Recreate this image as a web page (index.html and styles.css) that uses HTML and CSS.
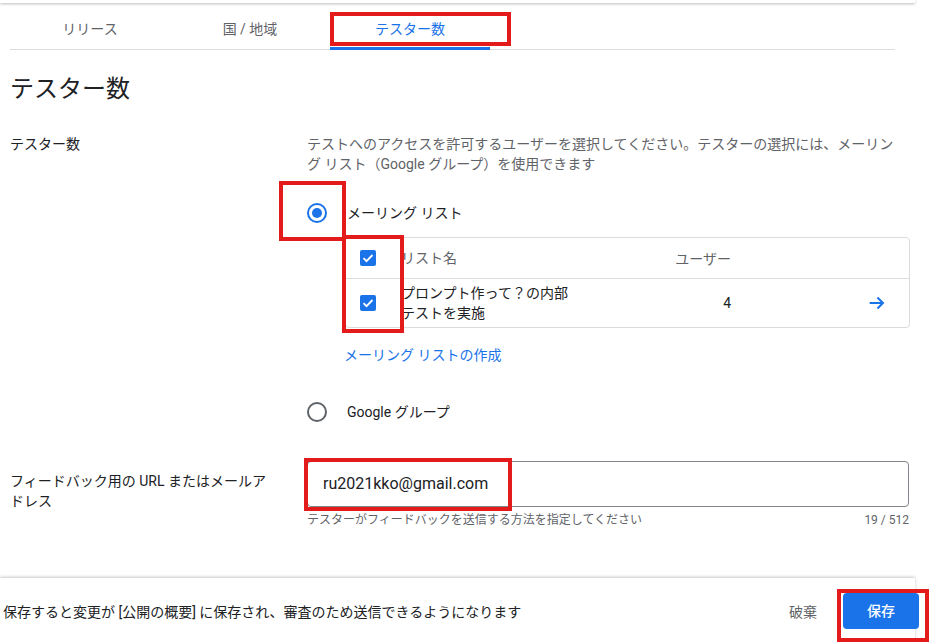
FILE: index.html
```html
<!DOCTYPE html>
<html lang="ja">
<head>
<meta charset="utf-8">
<link rel="stylesheet" href="styles.css">
</head>
<body>
<div class="topedge"></div>
<div class="page">
  <nav class="tabs">
    <div class="tab">リリース</div>
    <div class="tab">国 / 地域</div>
    <div class="tab active">テスター数</div>
  </nav>
  <h1 class="title">テスター数</h1>

  <section class="row row-testers">
    <div class="label">テスター数</div>
    <div class="content">
      <p class="desc">テストへのアクセスを許可するユーザーを選択してください。テスターの選択には、メーリング リスト（Google グループ）を使用できます</p>
      <div class="option">
        <span class="radio checked"></span>
        <span class="opt-label">メーリング リスト</span>
      </div>
      <div class="table">
        <div class="trow thead">
          <span class="cb"><svg viewBox="0 0 18 18" width="18" height="18"><rect x="1" y="1" width="16" height="16" rx="2" fill="#1a73e8"/><path d="M4.5 9.2l3 3 6-6.2" fill="none" stroke="#fff" stroke-width="1.8"/></svg></span>
          <span class="c-name">リスト名</span>
          <span class="c-users">ユーザー</span>
          <span class="c-act"></span>
        </div>
        <div class="trow tbody">
          <span class="cb"><svg viewBox="0 0 18 18" width="18" height="18"><rect x="1" y="1" width="16" height="16" rx="2" fill="#1a73e8"/><path d="M4.5 9.2l3 3 6-6.2" fill="none" stroke="#fff" stroke-width="1.8"/></svg></span>
          <span class="c-name">プロンプト作って？の内部<br>テストを実施</span>
          <span class="c-users">4</span>
          <span class="c-act"><svg viewBox="0 0 24 24" width="22" height="22"><path d="M4 12h14M12.5 6l6 6-6 6" fill="none" stroke="#1a73e8" stroke-width="2.2"/></svg></span>
        </div>
      </div>
      <a class="link">メーリング リストの作成</a>
      <div class="option option2">
        <span class="radio"></span>
        <span class="opt-label g">Google グループ</span>
      </div>
    </div>
  </section>

  <section class="row row-feedback">
    <div class="label">フィードバック用の URL またはメールアドレス</div>
    <div class="content">
      <div class="input">ru2021kko@gmail.com</div>
      <div class="helper"><span>テスターがフィードバックを送信する方法を指定してください</span><span>19 / 512</span></div>
    </div>
  </section>
</div>

<footer class="footer">
  <span class="ftext">保存すると変更が [公開の概要] に保存され、審査のため送信できるようになります</span>
  <span class="discard">破棄</span>
  <span class="save">保存</span>
</footer>

<div class="mark m1"></div>
<div class="mark m2"></div>
<div class="mark m3"></div>
<div class="mark m4"></div>
<div class="mark m5"></div>
</body>
</html>
```
FILE: styles.css
```css
* { box-sizing: border-box; }
html, body { margin: 0; padding: 0; background: #fff; }
body {
  font-family: Roboto, "Noto Sans CJK JP", sans-serif;
  color: #202124;
  font-size: 14px;
  width: 929px;
  height: 643px;
  overflow: hidden;
  position: relative;
}
.topedge {
  width: 915px;
  height: 3px;
  background: #fff;
  box-shadow: 0 1px 3px rgba(0,0,0,0.28);
}
.page { padding: 9px 0 0 0; }
.tabs {
  display: flex;
  margin-left: 10px;
  width: 885px;
  border-bottom: 1px solid #dadce0;
  height: 38px;
}
.tab {
  width: 160px;
  text-align: center;
  line-height: 34px;
  color: #5f6368;
  font-size: 14px;
}
.tab.active {
  color: #1a73e8;
  border-bottom: 3px solid #1a73e8;
  margin-bottom: -1px;
}
.title {
  margin: 23px 0 0 10px;
  font-size: 24px;
  font-weight: 400;
  line-height: 32px;
  color: #202124;
}
.row {
  display: grid;
  grid-template-columns: 297px 602px;
  padding-left: 10px;
}
.row-testers { margin-top: 29px; }
.label { line-height: 20px; color: #202124; }
.row-feedback .label { padding-right: 30px; margin-top: 10px; }
.desc {
  margin: 0;
  width: 596px;
  line-height: 20px;
  color: #5f6368;
}
.option {
  display: flex;
  align-items: center;
  height: 24px;
  margin-top: 27px;
}
.radio {
  width: 20px;
  height: 20px;
  border: 2px solid #5f6368;
  border-radius: 50%;
  position: relative;
  flex: none;
}
.radio.checked { border-color: #1a73e8; }
.radio.checked::after {
  content: "";
  position: absolute;
  left: 3px; top: 3px;
  width: 10px; height: 10px;
  border-radius: 50%;
  background: #1a73e8;
}
.opt-label { margin-left: 20px; line-height: 20px; }
.table {
  margin: 12px 0 0 38px;
  width: 565px;
  border: 1px solid #dadce0;
  border-radius: 4px;
}
.trow { display: flex; align-items: center; }
.thead { height: 41px; border-bottom: 1px solid #dadce0; color: #5f6368; }
.tbody { height: 48px; }
.cb { width: 55px; padding-left: 13px; display: flex; flex: none; }
.c-name { width: 270px; line-height: 20px; flex: none; }
.c-users { width: 60px; text-align: right; white-space: nowrap; flex: none; }
.c-act { flex: 1; display: flex; justify-content: flex-end; padding-right: 21px; }
.link {
  display: block;
  color: #1a73e8;
  margin: 17px 0 0 37px;
  line-height: 20px;
}
.option2 { margin-top: 35px; }
.row-feedback { margin-top: 37px; }
.input {
  height: 46px;
  border: 1px solid #80868b;
  border-radius: 4px;
  padding: 0 15px;
  font-size: 16px;
  line-height: 44px;
}
.helper {
  display: flex;
  justify-content: space-between;
  font-size: 12px;
  color: #5f6368;
  line-height: 16px;
  margin-top: 5px;
}
.footer {
  position: absolute;
  left: 0; top: 578px;
  width: 915px;
  height: 65px;
  display: flex;
  align-items: center;
  box-shadow: 0 -1px 3px rgba(0,0,0,0.22);
  background: #fff;
}
.ftext { margin-left: 3px; flex: 1; }
.discard { color: #5f6368; margin-right: 26px; }
.save {
  background: #1a73e8;
  color: #fff;
  font-weight: 500;
  width: 76px;
  height: 36px;
  line-height: 36px;
  text-align: center;
  border-radius: 4px;
  margin-right: -4px;
}
.mark { position: absolute; border: 4px solid #e31b1b; }
.m1 { left: 330px; top: 12px; width: 181px; height: 34px; }
.m2 { left: 279px; top: 181px; width: 67px; height: 60px; }
.m3 { left: 342px; top: 235px; width: 62px; height: 98px; }
.m4 { left: 304px; top: 458px; width: 208px; height: 53px; }
.m5 { left: 837px; top: 589px; width: 92px; height: 53px; }
```
